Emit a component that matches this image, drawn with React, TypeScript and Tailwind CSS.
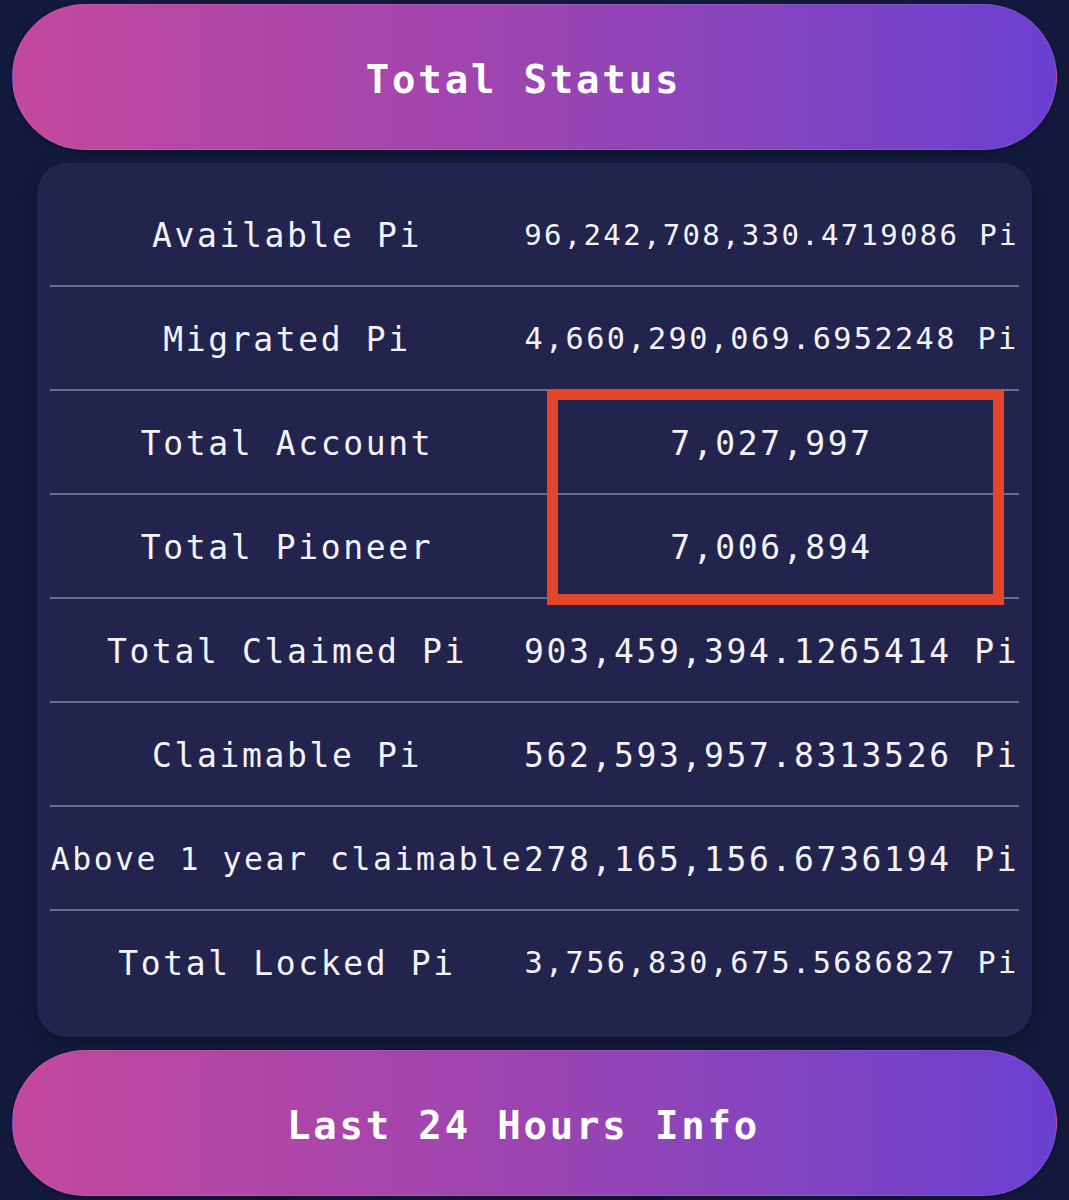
import React from "react";

type Row = {
  label: string;
  value: string;
  labelSize?: string;
  valueSize?: string;
};

// sizes shrink where the text would overflow its cell (like a scale-down fit)
const rows: Row[] = [
  { label: "Available Pi", value: "96,242,708,330.4719086 Pi", valueSize: "text-[29px]" },
  { label: "Migrated Pi", value: "4,660,290,069.6952248 Pi", valueSize: "text-[30.2px]" },
  { label: "Total Account", value: "7,027,997" },
  { label: "Total Pioneer", value: "7,006,894" },
  { label: "Total Claimed Pi", value: "903,459,394.1265414 Pi" },
  { label: "Claimable Pi", value: "562,593,957.8313526 Pi" },
  { label: "Above 1 year claimable", value: "278,165,156.6736194 Pi", labelSize: "text-[31.5px]" },
  { label: "Total Locked Pi", value: "3,756,830,675.5686827 Pi", valueSize: "text-[30.2px]" },
];

const mono = "font-['DejaVu_Sans_Mono',_'Liberation_Mono',_monospace]";

const PillButton = ({ title }: { title: string }) => (
  <div className="h-[146px] rounded-full bg-linear-to-r from-[#c3479e] via-[#9b44b1] to-[#6a3fd0] border border-[#ffffff1a] flex items-center justify-center pr-[22px] pt-[5px] shadow-[0_2px_6px_rgba(0,0,0,0.35)]">
    <span className={`${mono} text-[39px] font-bold tracking-[0.072em] text-white leading-none`}>{title}</span>
  </div>
);

const App = () => {
  return (
    <div className="min-h-screen bg-[#131a3d] px-[12px] pt-[4px] pb-[4px]">
      <PillButton title="Total Status" />

      <div className="relative mx-[25px] mt-[13px] rounded-[30px] bg-[#22244d] px-[13px] pt-[20px] pb-[24px] shadow-[0_4px_14px_rgba(0,0,0,0.35)]">
        {rows.map((row, i) => (
          <div
            key={row.label}
            className={`grid grid-cols-[474px_1fr] items-center pt-[3px] ${
              i < rows.length - 1 ? "h-[104px] border-b-2 border-[#6a6c90]" : "h-[102px]"
            }`}
          >
            <div className={`${mono} ${row.labelSize ?? "text-[33px]"} tracking-[0.08em] text-[#f3f3f8] text-center whitespace-nowrap leading-none`}>
              {row.label}
            </div>
            <div className={`${mono} ${row.valueSize ?? "text-[33px]"} tracking-[0.08em] text-[#f3f3f8] text-center whitespace-nowrap leading-none`}>
              {row.value}
            </div>
          </div>
        ))}

        {/* red highlight annotation */}
        <div className="absolute left-[510px] top-[226px] w-[457px] h-[216px] border-[11px] border-[#e3462a] pointer-events-none" />
      </div>

      <div className="mt-[13px]">
        <PillButton title="Last 24 Hours Info" />
      </div>
    </div>
  );
};

export default App;
